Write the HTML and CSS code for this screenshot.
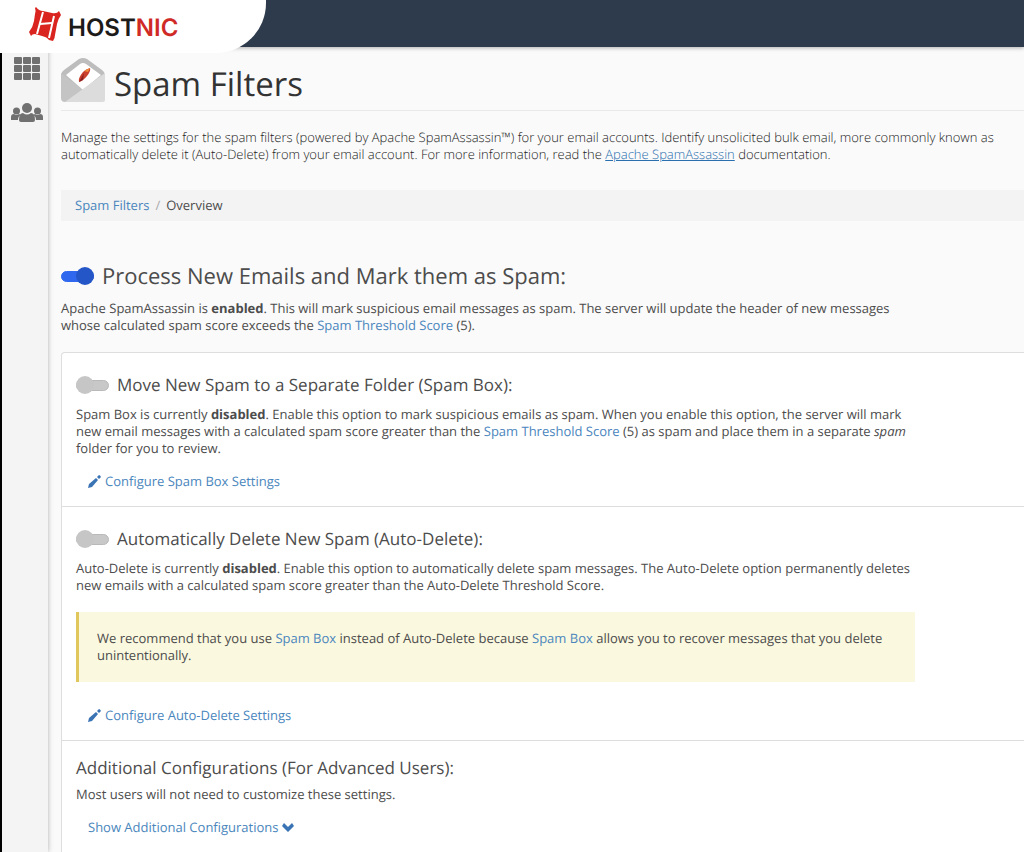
FILE: index.html
```html
<!DOCTYPE html>
<html lang="en">
<head>
  <meta charset="UTF-8">
  <meta name="viewport" content="width=device-width, initial-scale=1.0">
  <title>Spam Filters</title>
  <link rel="stylesheet" href="styles.css">
</head>
<body>
  <header class="topbar">
    <a class="brand" href="#">
      <svg class="brand-mark" viewBox="0 0 33 35" aria-hidden="true">
        <path d="M7 0 Q10 4 14 4 L23 6 Q28 7 30 4 L32 8 Q29 12 28 17 L26 28 Q26 31 24 34 L20 33 Q18 30 13 29 L6 27 Q3 27 2 29 L0 25 Q4 20 5 14 L6 7 Q7 3 6 1 Z" fill="#d9241f"/>
        <path d="M14 5 L8 27 M25 9 L20 31" fill="none" stroke="#fff" stroke-width="2"/>
        <path d="M11 17 L23 16" fill="none" stroke="#fff" stroke-width="2"/>
      </svg>
      <span class="brand-name">HOST<span class="brand-red">NIC</span></span>
    </a>
  </header>

  <div class="layout">
    <nav class="sidebar">
      <a href="#" aria-label="Tools">
        <svg width="26" height="24" viewBox="0 0 26 24" fill="#707070">
          <rect x="0" y="0" width="8" height="7" rx="1"/><rect x="9" y="0" width="8" height="7" rx="1"/><rect x="18" y="0" width="8" height="7" rx="1"/>
          <rect x="0" y="8" width="8" height="7" rx="1"/><rect x="9" y="8" width="8" height="7" rx="1"/><rect x="18" y="8" width="8" height="7" rx="1"/>
          <rect x="0" y="16" width="8" height="7" rx="1"/><rect x="9" y="16" width="8" height="7" rx="1"/><rect x="18" y="16" width="8" height="7" rx="1"/>
        </svg>
      </a>
      <a href="#" aria-label="Users">
        <svg width="32" height="20" viewBox="0 0 32 20" fill="#707070">
          <circle cx="5.500" cy="8" r="3.500"/>
          <circle cx="26.500" cy="8" r="3.500"/>
          <path d="M0 17 V14 Q0 11 3 11 Q5.500 13 8 11 L10 12 Q7 13 7 17 Z"/>
          <path d="M32 17 V14 Q32 11 29 11 Q26.500 13 24 11 L22 12 Q25 13 25 17 Z"/>
          <circle cx="16" cy="5" r="5"/>
          <path d="M8 17 Q8 10 12 10 Q16 13 20 10 Q24 10 24 17 Q24 19 22 19 H10 Q8 19 8 17 Z"/>
        </svg>
      </a>
    </nav>

    <main class="content">
      <div class="page-header">
        <svg width="44" height="44" viewBox="0 0 44 44" aria-hidden="true">
          <path d="M0 17 Q0 14 3 12 L18 1 Q22 -1 26 1 L41 12 Q44 14 44 17 V40 H0 Z" fill="#bdbdbd"/>
          <path d="M5 17 L19 6 Q22 4 25 6 L40 17 L22 32 Z" fill="#fff"/>
          <path d="M0 15 L22 32 L8 44 H4 Q0 44 0 40 Z" fill="#c4c4c4"/>
          <path d="M44 15 L4 44 H42 Q44 44 44 42 Z" fill="#dcdcdc"/>
          <path d="M18 24 Q17 20 22 14 Q25 11 29 10 Q30 13 26 18 Q22 23 18 24 Z" fill="#c9402c"/>
          <path d="M18 24 L23 15 L22 22 Z" fill="#8c2020"/>
          <path d="M23 13 L29 10 L27 14 Z" fill="#ef8b3a"/>
        </svg>
        <h1>Spam Filters</h1>
      </div>

      <p class="intro">Manage the settings for the spam filters (powered by Apache SpamAssassin™) for your email accounts. Identify unsolicited bulk email, more commonly known as<br>
        automatically delete it (Auto-Delete) from your email account. For more information, read the <a class="doc-link" href="#">Apache SpamAssassin</a> documentation.</p>

      <nav class="breadcrumb" aria-label="Breadcrumb">
        <a href="#">Spam Filters</a>
        <span class="slash">/</span>
        <span>Overview</span>
      </nav>

      <section class="process">
        <div class="option">
          <input class="switch" type="checkbox" id="process" checked>
          <h2><label for="process">Process New Emails and Mark them as Spam:</label></h2>
        </div>
        <p>Apache SpamAssassin is <strong>enabled</strong>. This will mark suspicious email messages as spam. The server will update the header of new messages<br>
          whose calculated spam score exceeds the <a href="#">Spam Threshold Score</a> (5).</p>
      </section>

      <div class="panel">
        <section class="panel-row">
          <div class="option">
            <input class="switch" type="checkbox" id="spambox">
            <h3><label for="spambox">Move New Spam to a Separate Folder (Spam Box):</label></h3>
          </div>
          <p>Spam Box is currently <strong>disabled</strong>. Enable this option to mark suspicious emails as spam. When you enable this option, the server will mark<br>
            new email messages with a calculated spam score greater than the <a href="#">Spam Threshold Score</a> (5) as spam and place them in a separate <em>spam</em><br>
            folder for you to review.</p>
          <a class="action" href="#">
            <svg width="13" height="13" viewBox="0 0 13 13" fill="#3a74b5"><path d="M0 13 L1 9 L8 3 L10 5 L4 12 Z M9 2 L11 0 Q12 0 13 2 L11 4 Z"/></svg>
            Configure Spam Box Settings
          </a>
        </section>

        <section class="panel-row">
          <div class="option">
            <input class="switch" type="checkbox" id="autodelete">
            <h3><label for="autodelete">Automatically Delete New Spam (Auto-Delete):</label></h3>
          </div>
          <p>Auto-Delete is currently <strong>disabled</strong>. Enable this option to automatically delete spam messages. The Auto-Delete option permanently deletes<br>
            new emails with a calculated spam score greater than the Auto-Delete Threshold Score.</p>
          <div class="callout">
            We recommend that you use <a href="#">Spam Box</a> instead of Auto-Delete because <a href="#">Spam Box</a> allows you to recover messages that you delete<br>
            unintentionally.
          </div>
          <a class="action" href="#">
            <svg width="13" height="13" viewBox="0 0 13 13" fill="#3a74b5"><path d="M0 13 L1 9 L8 3 L10 5 L4 12 Z M9 2 L11 0 Q12 0 13 2 L11 4 Z"/></svg>
            Configure Auto-Delete Settings
          </a>
        </section>

        <section class="panel-row">
          <h3>Additional Configurations (For Advanced Users):</h3>
          <p>Most users will not need to customize these settings.</p>
          <a class="action" href="#">
            Show Additional Configurations
            <svg width="12" height="9" viewBox="0 0 12 9" fill="#3a74b5"><path d="M0 3 L2 0 L6 4 L10 0 L12 3 L6 9 Z"/></svg>
          </a>
        </section>
      </div>
    </main>
  </div>
</body>
</html>
```
FILE: styles.css
```css
* {
  box-sizing: border-box;
}
body {
  margin: 0;
  min-height: 100vh;
  display: flex;
  flex-direction: column;
  overflow-x: hidden;
  font-family: "Open Sans", sans-serif;
  font-size: 13px;
  line-height: 17px;
  text-rendering: geometricPrecision;
  color: #4c4c4c;
  background: #fafafa;
}
h1, h2, h3, p {
  margin: 0;
  font-weight: 400;
}
a {
  color: #4a86bd;
  text-decoration: none;
}

/* top bar */
.topbar {
  height: 47px;
  background: #2e3b4c;
  box-shadow: 0 1px 4px rgba(0, 0, 0, 0.3);
  position: relative;
}
.brand {
  display: flex;
  align-items: center;
  gap: 6px;
  width: 266px;
  height: 53px;
  padding: 0 0 4px 29px;
  background: #fff;
  border-radius: 0 0 50px 0;
}
.brand-mark {
  width: 33px;
  height: 35px;
}
.brand-name {
  padding-top: 6px;
  font-family: Inter, sans-serif;
  font-size: 24px;
  line-height: 32px;
  font-weight: 600;
  color: #1d1a1a;
}
.brand-red {
  color: #d02a26;
}

.layout {
  flex: 1;
  display: flex;
}
.sidebar {
  width: 48px;
  flex: none;
  display: flex;
  flex-direction: column;
  align-items: center;
  gap: 22px;
  padding: 10px 0 0 4px;
  border-left: 2px solid #000;
  background: #f4f4f4;
  box-shadow: 0 0 5px rgba(0, 0, 0, 0.3);
}
.sidebar svg {
  display: block;
}
.content {
  flex: 1;
  min-width: 0;
  display: flex;
  flex-direction: column;
  padding-left: 13px;
  white-space: nowrap;
}

.page-header {
  display: flex;
  align-items: center;
  gap: 9px;
  padding: 11px 0 8px;
  border-bottom: 1px solid #e9e9e9;
}
h1 {
  padding-top: 7px;
  font-size: 33px;
  line-height: 37px;
  color: #333;
}
.intro {
  margin-top: 18px;
  font-weight: 300;
  color: #222;
}
.doc-link {
  color: #2a6fae;
  text-decoration: underline;
}
.breadcrumb {
  display: flex;
  gap: 6px;
  margin-top: 27px;
  padding: 7px 14px;
  background: #f3f3f3;
}
.slash {
  color: #aaa;
}

.option {
  display: flex;
  align-items: center;
  gap: 8px;
}
h2 {
  font-size: 22px;
  line-height: 30px;
}
h3 {
  font-size: 17px;
  line-height: 24px;
}
.process {
  margin-top: 40px;
}
.process p {
  margin-top: 9px;
}

/* toggle switches */
.switch {
  appearance: none;
  flex: none;
  display: flex;
  align-items: center;
  width: 33px;
  height: 11px;
  margin: 0;
  border: 1px solid #b9b9b9;
  border-radius: 6px;
  background: #c8c8c8;
}
.switch::before {
  content: "";
  flex: none;
  width: 18px;
  height: 18px;
  margin-left: -1px;
  border-radius: 50%;
  background: #c6c6c6;
}
.switch:checked {
  justify-content: flex-end;
  background: #2f68ee;
  border-color: #2f68ee;
}
.switch:checked::before {
  margin: 0 -1px 0 0;
  background: #2556c8;
}

.panel {
  flex: 1;
  margin-top: 18px;
  border: 1px solid #dedede;
  border-width: 1px 0 0 1px;
  border-radius: 4px 0 0 0;
  background: #fff;
}
.panel-row {
  padding: 20px 14px 16px;
}
.panel-row + .panel-row {
  border-top: 1px solid #dedede;
}
.panel-row:last-child {
  padding-top: 15px;
}
.panel-row p {
  margin-top: 9px;
}
.panel-row:last-child p {
  margin-top: 6px;
}
.action {
  display: flex;
  align-items: center;
  gap: 4px;
  width: fit-content;
  margin: 16px 0 0 12px;
}
.callout {
  max-width: 839px;
  margin: 18px 0 25px;
  padding: 18px;
  border-left: 3px solid #dfc75c;
  background: #faf8df;
}
```
